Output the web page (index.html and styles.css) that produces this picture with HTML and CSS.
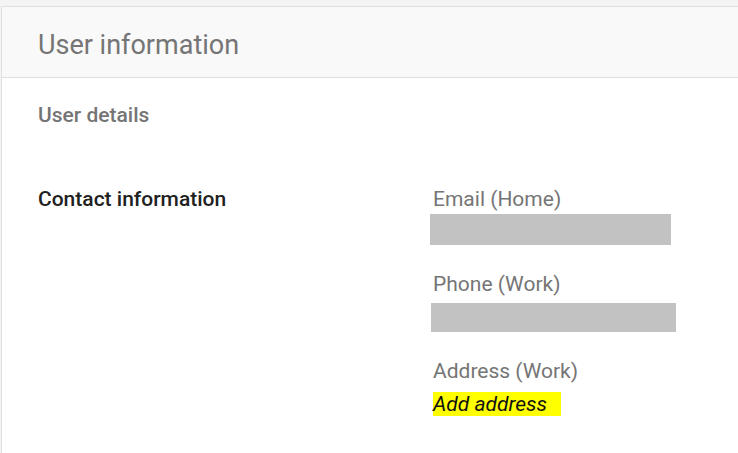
FILE: index.html
```html
<!DOCTYPE html>
<html>
<head>
<meta charset="utf-8">
<link rel="stylesheet" href="styles.css">
</head>
<body>
<div class="card">
  <div class="card-header">User information</div>
  <div class="card-body">
    <div class="section-title">User details</div>
    <div class="row">
      <div class="row-label">Contact information</div>
      <div class="fields">
        <div class="field">
          <div class="field-label">Email (Home)</div>
          <div class="redacted redacted-email"></div>
        </div>
        <div class="field">
          <div class="field-label">Phone (Work)</div>
          <div class="redacted redacted-phone"></div>
        </div>
        <div class="field">
          <div class="field-label">Address (Work)</div>
          <div class="add-link"><span class="highlight">Add address</span></div>
        </div>
      </div>
    </div>
  </div>
</div>
</body>
</html>
```

FILE: styles.css
```css
html, body {
  margin: 0;
  padding: 0;
}
body {
  background: #f4f4f4;
  font-family: Roboto, "Liberation Sans", sans-serif;
  padding: 6px 0 0 1px;
  overflow: hidden;
  height: 453px;
  box-sizing: border-box;
}
.card {
  background: #ffffff;
  border: 1px solid #e0e0e0;
  border-right: none;
  border-bottom: none;
  height: 100%;
}
.card-header {
  background: #f9f9f9;
  border-bottom: 1px solid #e0e0e0;
  padding: 23px 36px 17px;
  font-size: 27px;
  line-height: 30px;
  color: #757575;
}
.card-body {
  padding: 25px 36px 0;
}
.section-title {
  font-size: 21px;
  line-height: 24px;
  font-weight: 500;
  color: #757575;
}
.row {
  display: grid;
  grid-template-columns: 395px 1fr;
  margin-top: 60px;
}
.row-label {
  font-size: 21px;
  line-height: 24px;
  font-weight: 500;
  color: #212121;
}
.fields {
  display: flex;
  flex-direction: column;
  gap: 27px;
}
.field-label {
  font-size: 21px;
  line-height: 24px;
  color: #757575;
}
.redacted {
  background: #c2c2c2;
}
.redacted-email {
  width: 241px;
  height: 31px;
  margin: 3px 0 0 -3px;
}
.redacted-phone {
  width: 245px;
  height: 29px;
  margin: 7px 0 0 -2px;
}
.add-link {
  margin-top: 9px;
  font-size: 21px;
  line-height: 24px;
  font-style: italic;
  color: #111111;
}
.highlight {
  background: #ffff00;
  padding-right: 14px;
}
```
